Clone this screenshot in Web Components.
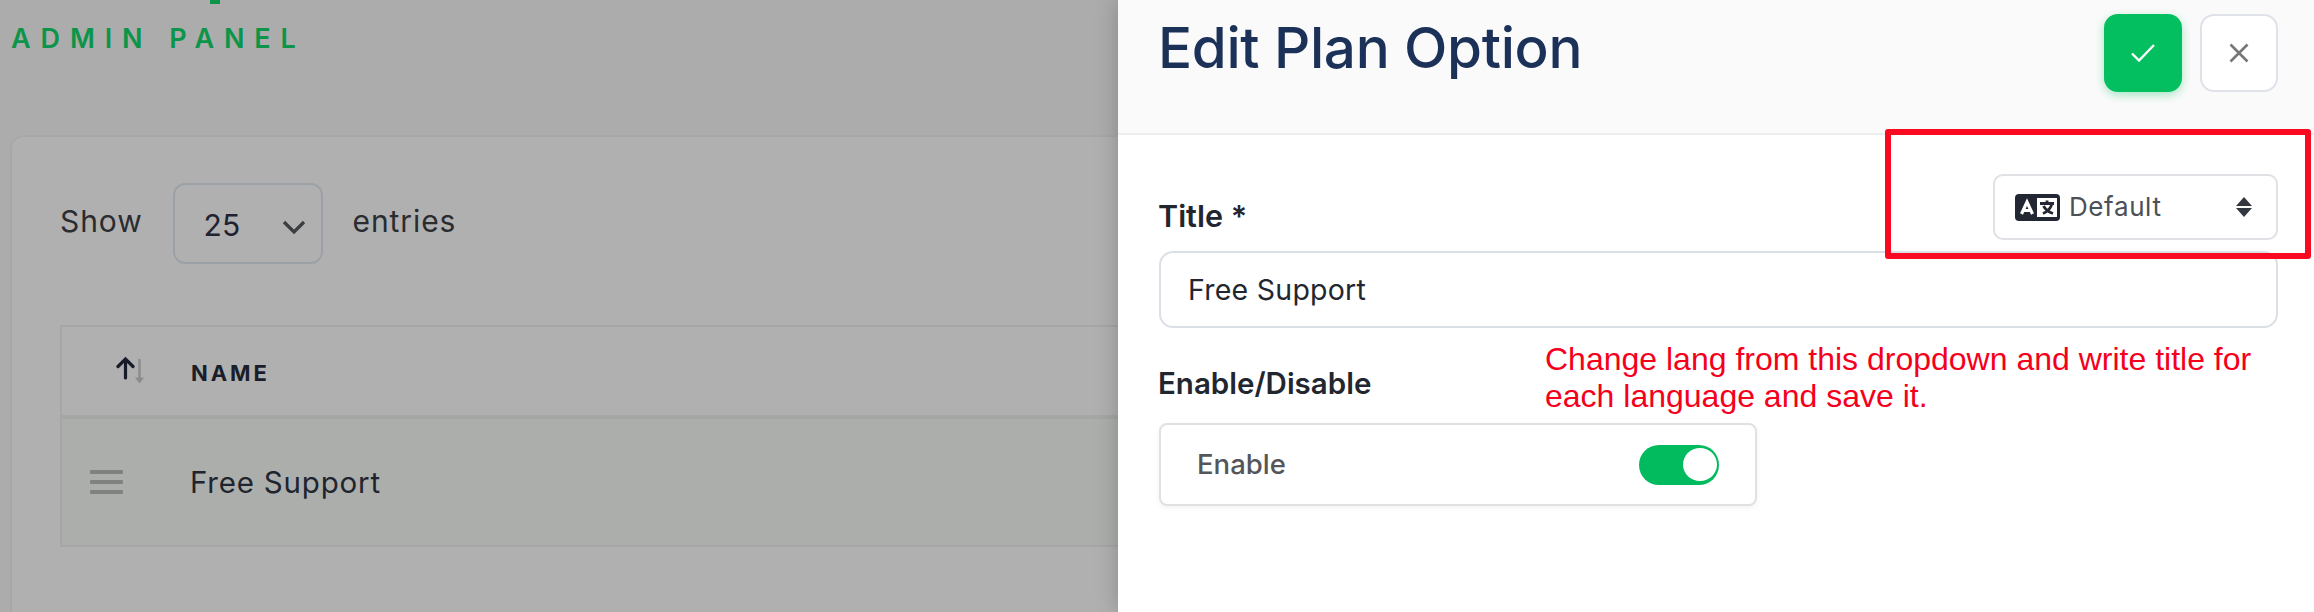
<!DOCTYPE html>
<html lang="en"><head><meta charset="utf-8"><title>Edit Plan Option</title>
<style>
html,body{margin:0;padding:0;height:100%;overflow:hidden}
body{font-family:Inter,"Liberation Sans",sans-serif;background:#acacac}
</style></head><body>
<app-shell>
  <list-page></list-page>
  <plan-drawer></plan-drawer>
</app-shell>
<script>
function def(name,html){
  customElements.define(name,class extends HTMLElement{
    constructor(){super();this.attachShadow({mode:'open'}).innerHTML=html;}
  });
}
def('app-shell',`<style>:host{display:block;position:relative;width:2314px;height:612px;overflow:hidden;background:#acacac}</style><slot></slot>`);

def('list-page',`<style>
:host{display:flex;flex-direction:column;padding:0 0 0 10px;height:612px;box-sizing:border-box}
</style>
<brand-mark></brand-mark><entries-card></entries-card>`);

def('brand-mark',`<style>
:host{display:block;height:135px;position:relative;color:#0c9549;padding-left:1px}
.stem{display:block;width:10px;height:4px;background:#0c9549;margin-left:199px}
.t{display:block;margin-top:20px;font:600 27px/30px Inter,sans-serif;letter-spacing:9.9px;white-space:nowrap}
</style><span class="stem"></span><span class="t">ADMIN PANEL</span>`);

def('entries-card',`<style>
:host{display:block;flex:1;background:#b0b0b0;border:2px solid #a8a8a8;border-right:0;border-bottom:0;border-top-left-radius:14px;padding:46px 0 0 48px}
.show{display:flex;align-items:center;gap:30px;font:400 30px/36px Inter,sans-serif;color:#2a2c30;height:81px;letter-spacing:.9px}
.show>span{position:relative;top:-3px}
.sel{box-sizing:border-box;width:150px;height:81px;border:2px solid #9ca1a8;border-radius:12px;display:flex;align-items:center;justify-content:space-between;padding:0 15px 0 29px;color:#1f2230;letter-spacing:0}
.sel span{position:relative;top:1px}
.sel svg{position:relative;top:3px}
</style>
<div class="show"><span>Show</span><div class="sel"><span>25</span>
<svg width="24" height="16" viewBox="0 0 24 16" fill="none" stroke="#3c3d40" stroke-width="3.2"><path d="M2 3l10 10L22 3"/></svg></div><span>entries</span></div>
<plan-table></plan-table>`);

def('plan-table',`<style>
:host{display:block;margin-top:61px;width:2240px;border:2px solid #a6a6a6;box-sizing:border-box}
.h,.r{display:flex;align-items:center}
.h{height:88px;border-bottom:4px solid #a6a6a6;box-sizing:content-box}
.r{height:126px;background:#acaeac}
.c1{width:129px;flex:none;display:flex;box-sizing:border-box}
.r .c1{width:128px}
.h .c1{padding-left:54px}
.r .c1{padding-left:28px}
.name{font:700 22px/26px Inter,sans-serif;letter-spacing:2.9px;color:#1a1e2a;position:relative;top:2px}
.v{font:400 29.5px/36px Inter,sans-serif;color:#20242e;letter-spacing:.8px}
</style>
<div class="h"><div class="c1"><svg width="30" height="30" viewBox="0 0 30 30" fill="none">
<path d="M9.5 22V3M2 10.500l7.500-7.500L17 10.500" stroke="#181c28" stroke-width="3.2" stroke-linecap="round"/>
<path d="M23.5 3v22" stroke="#8b8b8b" stroke-width="2.4"/><path d="M19 21.5l4.5 6 4.5-6z" fill="#8b8b8b"/></svg></div>
<span class="name">NAME</span></div>
<div class="r"><div class="c1"><svg width="33" height="26" viewBox="0 0 33 26"><g fill="#808180"><rect y="1" width="33" height="4" rx="1.2"/><rect y="11" width="33" height="4" rx="1.2"/><rect y="21" width="33" height="4" rx="1.2"/></g></svg></div>
<span class="v">Free Support</span></div>`);

def('plan-drawer',`<style>
:host{position:absolute;top:0;right:0;bottom:0;width:1196px;background:#fff;box-shadow:0 0 22px rgba(0,0,0,.22);display:flex;flex-direction:column}
header{background:#fafafa;padding:14px 36px 0 40px;border-bottom:2px solid #eeeeee;box-sizing:content-box;display:flex;justify-content:space-between;height:119px}
h1{margin:0;font:500 56.6px/68px Inter,sans-serif;color:#1b3158;letter-spacing:-.35px}
.acts{display:flex;gap:18px;align-items:flex-start}
.main{padding:39px 36px 0 41px;display:flex;flex-direction:column}
.top{display:flex;justify-content:space-between;align-items:flex-end;margin-bottom:11px}
label{display:block;font:600 29.5px/36px Inter,sans-serif;color:#22262f;margin-left:-1px}
.top label{position:relative;top:-6px;font-size:30.5px}
.en{margin:37px 0 22px -1px}
</style>
<header><h1>Edit Plan Option</h1><div class="acts"><icon-btn kind="ok"></icon-btn><icon-btn kind="close"></icon-btn></div></header>
<div class="main">
<div class="top"><label>Title *</label><lang-select></lang-select></div>
<text-box>Free Support</text-box>
<label class="en">Enable/Disable</label>
<switch-row>Enable</switch-row>
</div>
<call-out></call-out>`);

customElements.define('icon-btn',class extends HTMLElement{
  constructor(){super();
    const ok=this.getAttribute('kind')==='ok';
    this.attachShadow({mode:'open'}).innerHTML=`<style>
:host{display:flex;align-items:center;justify-content:center;box-sizing:border-box;width:78px;height:78px;border-radius:14px;${ok?'background:#03bf60;box-shadow:0 3px 10px rgba(3,191,96,.35)':'background:#fff;border:2px solid #dfe2e8'}}
</style>${ok?`<svg width="24" height="18" viewBox="0 0 24 18" fill="none" stroke="#fff" stroke-width="2.4"><path d="M1 9.5l7 7L23 1"/></svg>`:`<svg width="20" height="20" viewBox="0 0 20 20" fill="none" stroke="#777" stroke-width="2.6"><path d="M1.5 1.5l17 17M18.5 1.5l-17 17"/></svg>`}`;
  }
});

def('lang-select',`<style>
:host{box-sizing:border-box;width:285px;height:66px;border:2px solid #dfe1e5;border-radius:10px;display:flex;align-items:center;padding:0 24px 0 20px;font:400 26px/32px Inter,sans-serif;color:#4b5059;background:#fff;letter-spacing:.6px}
.d{margin-left:9px;flex:1}
</style>
<svg width="45" height="27" viewBox="0 0 45 27"><rect width="45" height="27" rx="4" fill="#232733"/>
<rect x="22" y="4" width="20" height="19" fill="#fff"/>
<path d="M6.5 20L12 8l5.500 12M8.500 16.500h7" fill="none" stroke="#fff" stroke-width="3.2"/>
<path d="M25 9.500h14M32 6.500v3M37 9.500c-1 4.500-4.500 8-9 10M28.500 12c2 3.500 5 6 9.500 7.500" fill="none" stroke="#232733" stroke-width="2.8"/></svg>
<span class="d">Default</span>
<svg width="16" height="20" viewBox="0 0 16 20" fill="#33373f"><path d="M8 0l8 9H0zM0 11h16l-8 9z"/></svg>`);

def('text-box',`<style>
:host{display:flex;align-items:center;box-sizing:border-box;height:77px;border:2px solid #dbe0e6;border-radius:14px;padding:0 0 0 27px;font:400 28.5px/36px Inter,sans-serif;color:#22262f;letter-spacing:.25px}
</style><slot></slot>`);

def('switch-row',`<style>
:host{display:flex;align-items:center;justify-content:space-between;box-sizing:border-box;width:598px;height:83px;border:2px solid #e1e1e1;border-radius:8px;box-shadow:0 2px 5px rgba(0,0,0,.05);padding:0 36px 0 36px;font:500 27.5px/32px Inter,sans-serif;color:#545659}
.sw{width:80px;height:40px;border-radius:20px;background:#03bb5f;display:flex;justify-content:flex-end;align-items:center;padding:0 2px;box-sizing:border-box}
.k{width:34px;height:33px;border-radius:50%;background:#fff}
span{position:relative;top:-1px}
</style><span><slot></slot></span><div class="sw"><div class="k"></div></div>`);

def('call-out',`<style>
:host{display:block;position:absolute;inset:0;pointer-events:none}
.box{position:absolute;left:767px;top:129px;width:426px;height:130px;box-sizing:border-box;border:6px solid #f90a21;border-radius:3px}
.note{position:absolute;left:427px;top:341px;width:760px;font:400 32px/37px "Liberation Sans",Arial,sans-serif;color:#f5001c}
</style><div class="box"></div><div class="note">Change lang from this dropdown and write title for<br>each language and save it.</div>`);
</script>
</body></html>
